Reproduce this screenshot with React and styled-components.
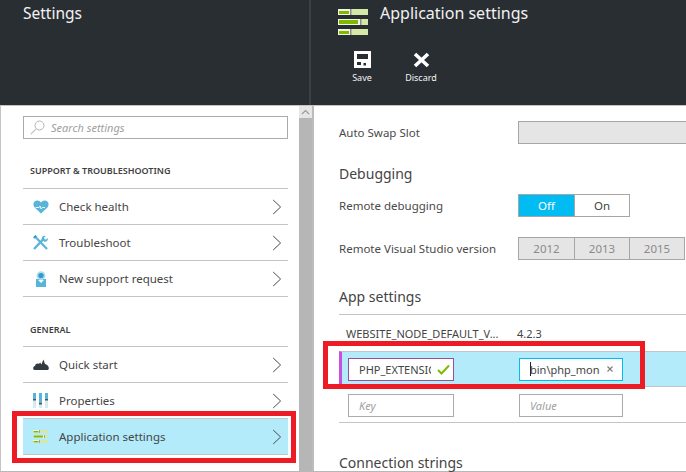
import styled, { createGlobalStyle } from "styled-components";

const GlobalStyle = createGlobalStyle`
  html, body {
    margin: 0;
    padding: 0;
    background: #fff;
  }
  * {
    box-sizing: border-box;
  }
`;

const Page = styled.div`
  position: relative;
  width: 686px;
  height: 472px;
  overflow: hidden;
  background: #fff;
  color: #3c3c3c;
  font-family: "Noto Sans", "Open Sans", sans-serif;
  font-size: 12px;
`;

const Header = styled.header`
  display: flex;
  height: 106px;
  background: #292e33;
  border-bottom: 1px solid #c4c4c4;
  color: #fff;
`;

const LeftHead = styled.div`
  width: 311px;
  padding: 0 0 0 23px;
  border-right: 2px solid #3a4046;
  font-size: 15.5px;
  line-height: 26px;
  color: #f2f2f2;
`;

const RightHead = styled.div`
  flex: 1;
  padding: 0 0 0 27px;
`;

const TitleRow = styled.div`
  display: flex;
  gap: 12px;
  height: 51px;
  padding-top: 0;
  font-size: 16px;
  line-height: 26px;
  color: #f2f2f2;
  svg {
    margin-top: 9px;
    flex: none;
  }
`;

const Commands = styled.div`
  display: flex;
  gap: 28px;
  margin-left: 9px;
`;

const Command = styled.div`
  display: flex;
  flex-direction: column;
  align-items: center;
  gap: 3px;
  width: ${(p) => p.$w}px;
  font-size: 9px;
  line-height: 14px;
  color: #f4f4f4;
  svg {
    display: block;
  }
`;

const Body = styled.div`
  display: flex;
  height: 366px;
  border-bottom: 1px solid #b8b8b8;
`;

const LeftPanel = styled.aside`
  width: 299px;
  padding: 10px 11px 0 23px;
  border-left: 1px solid #c4c4c4;
`;

const Scrollbar = styled.div`
  width: 13px;
  background: #b6b6b6;
`;

const ScrollArrow = styled.div`
  display: flex;
  align-items: center;
  justify-content: center;
  height: 12px;
  background: #e6e6e6;
`;

const Search = styled.div`
  display: flex;
  align-items: center;
  gap: 6px;
  height: 23px;
  padding-left: 6px;
  margin-left: -1px;
  border: 1px solid #ababab;
  font-size: 11px;
  font-style: italic;
  color: #a0a0a0;
`;

const SectionLabel = styled.div`
  height: ${(p) => p.$h}px;
  padding: ${(p) => p.$top}px 0 0 7px;
  margin-left: -1px;
  font-size: 9px;
  line-height: 14px;
  font-weight: 600;
  color: #3f3f3f;
  border-bottom: 1px solid #c4c4c4;
`;

const Menu = styled.div`
  margin-left: -1px;
`;

const MenuRow = styled.div`
  display: flex;
  align-items: center;
  height: 36px;
  padding: 0 6px 0 10px;
  border-bottom: 1px solid #c4c4c4;
  background: ${(p) => (p.$active ? "#b4ebfa" : "transparent")};
  font-size: 11.5px;
  color: #454545;
`;

const MenuIcon = styled.span`
  display: flex;
  width: 16px;
  margin-right: 10px;
`;

const MenuLabel = styled.span`
  flex: 1;
`;

const RightPanel = styled.main`
  position: relative;
  flex: 1;
  padding: 15px 0 0 25px;
  border-left: 2px solid #bcbcbc;
`;

const Row = styled.div`
  display: flex;
  align-items: center;
  height: 23px;
  margin-bottom: ${(p) => p.$mb || 0}px;
  font-size: 11.5px;
  color: #4a4a4a;
`;

const RowLabel = styled.div`
  width: 179px;
`;

const EmptyField = styled.div`
  flex: 1;
  align-self: stretch;
  background: #e5e5e5;
  border: 1px solid #a6a6a6;
  border-right: none;
`;

const Heading = styled.h2`
  margin: 0;
  padding-top: ${(p) => p.$top}px;
  height: ${(p) => p.$h}px;
  font-size: 14px;
  font-weight: 400;
  line-height: 20px;
  color: #444;
`;

const Segments = styled.div`
  display: flex;
  height: 23px;
  border: 1px solid #a6a6a6;
`;

const Segment = styled.div`
  display: flex;
  align-items: center;
  justify-content: center;
  width: ${(p) => p.$w}px;
  border-left: ${(p) => (p.$first ? "none" : "1px solid #a6a6a6")};
  background: ${(p) => (p.$on ? "#00bcf2" : p.$off ? "#e5e5e5" : "#fff")};
  color: ${(p) => (p.$on ? "#fff" : p.$off ? "#8a8a8a" : "#444")};
  font-size: 11.5px;
`;

const SettingsTable = styled.div`
  border-top: 1px solid #c4c4c4;
  border-bottom: 1px solid #c4c4c4;
  height: 109px;
  margin-bottom: 30px;
`;

const StaticRow = styled.div`
  display: flex;
  align-items: center;
  height: 36px;
  padding-left: 7px;
  font-size: 11px;
  color: #444;
`;

const KeyCell = styled.div`
  width: 171px;
  white-space: nowrap;
`;

const EditRow = styled.div`
  display: flex;
  align-items: center;
  height: 36px;
  padding-left: ${(p) => (p.$active ? 6 : 9)}px;
  background: ${(p) => (p.$active ? "#b4ebfa" : "transparent")};
  border-top: ${(p) => (p.$active ? "1px solid #c4c4c4" : "none")};
  border-bottom: ${(p) => (p.$active ? "1px solid #c4c4c4" : "none")};
  border-left: ${(p) => (p.$active ? "3px solid #c94fdc" : "none")};
`;

const TextBox = styled.div`
  display: flex;
  align-items: center;
  overflow: hidden;
  white-space: nowrap;
  width: ${(p) => p.$w}px;
  height: 23px;
  margin-right: ${(p) => p.$mr || 0}px;
  padding: 0 ${(p) => p.$pr || 0}px 0 ${(p) => p.$pl}px;
  background: #fff;
  border: 1px solid ${(p) => p.$border};
  font-size: 11px;
  font-style: ${(p) => (p.$hint ? "italic" : "normal")};
  color: ${(p) => (p.$hint ? "#a0a0a0" : "#444")};
`;

const Clip = styled.span`
  display: flex;
  overflow: hidden;
  width: ${(p) => p.$w}px;
  margin-right: ${(p) => p.$mr || 0}px;
  flex: none;
`;

const Caret = styled.span`
  flex: none;
  width: 1px;
  height: 14px;
  margin-right: -1px;
  background: #222;
`;

const Highlight = styled.div`
  position: absolute;
  left: ${(p) => p.$x}px;
  top: ${(p) => p.$y}px;
  width: ${(p) => p.$w}px;
  height: ${(p) => p.$h}px;
  border: 5px solid #ed1c24;
  pointer-events: none;
`;

function Chevron() {
  return (
    <svg width="10" height="16" viewBox="0 0 10 16">
      <path d="M1.2 1 L8.6 8 L1.2 15" fill="none" stroke="#4a4a4a" strokeWidth="1" />
    </svg>
  );
}

function SettingsGlyph({ w, h }) {
  return (
    <svg width={w} height={h} viewBox="0 0 30 26">
      <rect x="0" y="0" width="30" height="6" fill="#d6e8a8" />
      <rect x="0" y="0" width="12" height="6" fill="#f1f5e4" />
      <rect x="1" y="2" width="10" height="3" fill="#7fba00" />
      <rect x="12" y="0" width="1.5" height="6" fill="#8c8c8c" />
      <rect x="0" y="10" width="30" height="6" fill="#d6e8a8" />
      <rect x="0" y="10" width="23" height="6" fill="#f1f5e4" />
      <rect x="1" y="11" width="19" height="4" fill="#7fba00" />
      <rect x="22" y="10" width="1.5" height="6" fill="#8c8c8c" />
      <rect x="0" y="20" width="30" height="6" fill="#d6e8a8" />
      <rect x="0" y="20" width="12" height="6" fill="#f1f5e4" />
      <rect x="1" y="22" width="10" height="3" fill="#7fba00" />
      <rect x="12" y="20" width="1.5" height="6" fill="#8c8c8c" />
    </svg>
  );
}

function HeartIcon() {
  return (
    <svg width="16" height="14" viewBox="0 0 16 14">
      <path d="M8 13.5 L1.6 7.5 C-0.6 5 0.4 1 3.8 0.6 C5.6 0.4 7 1.2 8 2.6 C9 1.2 10.4 0.4 12.2 0.6 C15.6 1 16.6 5 14.4 7.5 Z" fill="#59b4d9" />
      <path d="M2.5 7.5 H6 L7 6 L8.2 9 L9.4 7.5 H12" fill="none" stroke="#fff" strokeWidth="0.9" />
    </svg>
  );
}

function ToolsIcon() {
  return (
    <svg width="16" height="16" viewBox="0 0 16 16">
      <path d="M1 14 L10 4.5" stroke="#59b4d9" strokeWidth="2.4" fill="none" />
      <path d="M8.6 4.2 C8.4 2 10.4 0.4 12.6 1 L10.8 3 L12.6 4.8 L14.8 3 C15.4 5.4 13.2 7.4 11 6.6 Z" fill="#59b4d9" />
      <path d="M2 1.5 L14 14" stroke="#59b4d9" strokeWidth="2.2" fill="none" />
      <path d="M0.8 3 L3.2 0.6" stroke="#3999c6" strokeWidth="2" fill="none" />
    </svg>
  );
}

function SupportIcon() {
  return (
    <svg width="16" height="16" viewBox="0 0 16 16">
      <path d="M3 8 H13 V16 H3 Z" fill="#59b4d9" />
      <circle cx="8" cy="4.6" r="4.4" fill="#a9dff2" />
      <circle cx="8" cy="4.6" r="2.7" fill="#3999c6" />
      <path d="M5 9 L8 12 L11 9 Z" fill="#fff" />
    </svg>
  );
}

function CloudIcon() {
  return (
    <svg width="16" height="11" viewBox="0 0 16 11">
      <path d="M1.5 11 C-0.3 10.6 -0.3 7.4 2 7 C2.4 4.8 4.6 4 5.8 5 L7.2 3.4 L8.4 5.4 L10.4 0.6 L12 5 C14.4 5.4 16.6 8 15.6 10.2 C15.4 10.7 15 11 14.4 11 Z" fill="#333a40" />
    </svg>
  );
}

function SlidersIcon() {
  return (
    <svg width="15" height="15" viewBox="0 0 15 15">
      <rect x="0" y="0" width="3" height="15" fill="#d4eaf5" />
      <rect x="0" y="0" width="3" height="6" fill="#59b4d9" />
      <rect x="6" y="0" width="3" height="15" fill="#d4eaf5" />
      <rect x="6" y="0" width="3" height="10" fill="#59b4d9" />
      <rect x="12" y="0" width="3" height="15" fill="#d4eaf5" />
      <rect x="12" y="0" width="3" height="6" fill="#59b4d9" />
      <rect x="0" y="6" width="3" height="1.5" fill="#555" />
      <rect x="6" y="10" width="3" height="1.5" fill="#555" />
      <rect x="12" y="6" width="3" height="1.5" fill="#555" />
    </svg>
  );
}

function SearchIcon() {
  return (
    <svg width="15" height="15" viewBox="0 0 15 15">
      <circle cx="9.5" cy="5.5" r="4.5" fill="none" stroke="#b5b5b5" />
      <path d="M6.2 8.8 L0.8 14.2" stroke="#c4c4c4" strokeWidth="1.2" />
    </svg>
  );
}

const menuTop = [
  { label: "Check health", icon: <HeartIcon /> },
  { label: "Troubleshoot", icon: <ToolsIcon /> },
  { label: "New support request", icon: <SupportIcon /> },
];

const menuGeneral = [
  { label: "Quick start", icon: <CloudIcon /> },
  { label: "Properties", icon: <SlidersIcon /> },
  { label: "Application settings", icon: <SettingsGlyph w={15} h={13} />, active: true },
];

function MenuList({ items }) {
  return (
    <Menu>
      {items.map((item) => (
        <MenuRow key={item.label} $active={item.active}>
          <MenuIcon>{item.icon}</MenuIcon>
          <MenuLabel>{item.label}</MenuLabel>
          <Chevron />
        </MenuRow>
      ))}
    </Menu>
  );
}

export default function App() {
  return (
    <Page>
      <GlobalStyle />
      <Header>
        <LeftHead>Settings</LeftHead>
        <RightHead>
          <TitleRow>
            <SettingsGlyph w={30} h={26} />
            Application settings
          </TitleRow>
          <Commands>
            <Command $w={30}>
              <svg width="17" height="17" viewBox="0 0 17 17">
                <path d="M0 0 H17 V17 H0 Z M3 3 V8 H14 V3 Z M3 11 V14 H7 V11 Z M9.5 12 V14.5 H12 V12 Z" fill="#fff" fillRule="evenodd" />
              </svg>
              Save
            </Command>
            <Command $w={32}>
              <svg width="17" height="17" viewBox="0 0 17 17">
                <path d="M2 3 L15 15 M15 3 L2 15" stroke="#fff" strokeWidth="3.6" fill="none" />
              </svg>
              Discard
            </Command>
          </Commands>
        </RightHead>
      </Header>
      <Body>
        <LeftPanel>
          <Search>
            <SearchIcon />
            Search settings
          </Search>
          <SectionLabel $h={50} $top={25}>SUPPORT &amp; TROUBLESHOOTING</SectionLabel>
          <MenuList items={menuTop} />
          <SectionLabel $h={50} $top={26}>GENERAL</SectionLabel>
          <MenuList items={menuGeneral} />
        </LeftPanel>
        <Scrollbar>
          <ScrollArrow>
            <svg width="9" height="6" viewBox="0 0 9 6">
              <path d="M1 5 L4.5 1.5 L8 5" fill="none" stroke="#9a9a9a" strokeWidth="1.2" />
            </svg>
          </ScrollArrow>
        </Scrollbar>
        <RightPanel>
          <Row $mb={20}>
            <RowLabel>Auto Swap Slot</RowLabel>
            <EmptyField />
          </Row>
          <Heading $top={0} $h={30}>Debugging</Heading>
          <Row $mb={20}>
            <RowLabel>Remote debugging</RowLabel>
            <Segments>
              <Segment $w={55} $first $on>Off</Segment>
              <Segment $w={55}>On</Segment>
            </Segments>
          </Row>
          <Row $mb={27}>
            <RowLabel>Remote Visual Studio version</RowLabel>
            <Segments>
              <Segment $w={55} $first $off>2012</Segment>
              <Segment $w={55} $off>2013</Segment>
              <Segment $w={55} $off>2015</Segment>
            </Segments>
          </Row>
          <Heading $top={0} $h={27}>App settings</Heading>
          <SettingsTable>
            <StaticRow>
              <KeyCell>WEBSITE_NODE_DEFAULT_V...</KeyCell>
              4.2.3
            </StaticRow>
            <EditRow $active>
              <TextBox $w={106} $pl={10} $mr={65} $border="#9b4f96">
                <Clip $w={72} $mr={6}>PHP_EXTENSIONS</Clip>
                <svg width="13" height="11" viewBox="0 0 13 11">
                  <path d="M1 6 L4.5 9.5 L12 1.5" fill="none" stroke="#7fba00" strokeWidth="2" />
                </svg>
              </TextBox>
              <TextBox $w={104} $pl={10} $border="#00bcf2">
                <Caret />
                <Clip $w={70} $mr={6}>bin\php_mongo.dll</Clip>
                <svg width="8" height="8" viewBox="0 0 8 8">
                  <path d="M1.5 1.5 L6.5 6.5 M6.5 1.5 L1.5 6.5" stroke="#7a7a7a" strokeWidth="1.1" />
                </svg>
              </TextBox>
            </EditRow>
            <EditRow>
              <TextBox $w={106} $pl={10} $mr={65} $border="#ababab" $hint>Key</TextBox>
              <TextBox $w={104} $pl={10} $border="#ababab" $hint>Value</TextBox>
            </EditRow>
          </SettingsTable>
          <Heading $top={0} $h={20}>Connection strings</Heading>
        </RightPanel>
      </Body>
      <Highlight $x={12} $y={411} $w={284} $h={52} />
      <Highlight $x={323} $y={341} $w={322} $h={48} />
    </Page>
  );
}
